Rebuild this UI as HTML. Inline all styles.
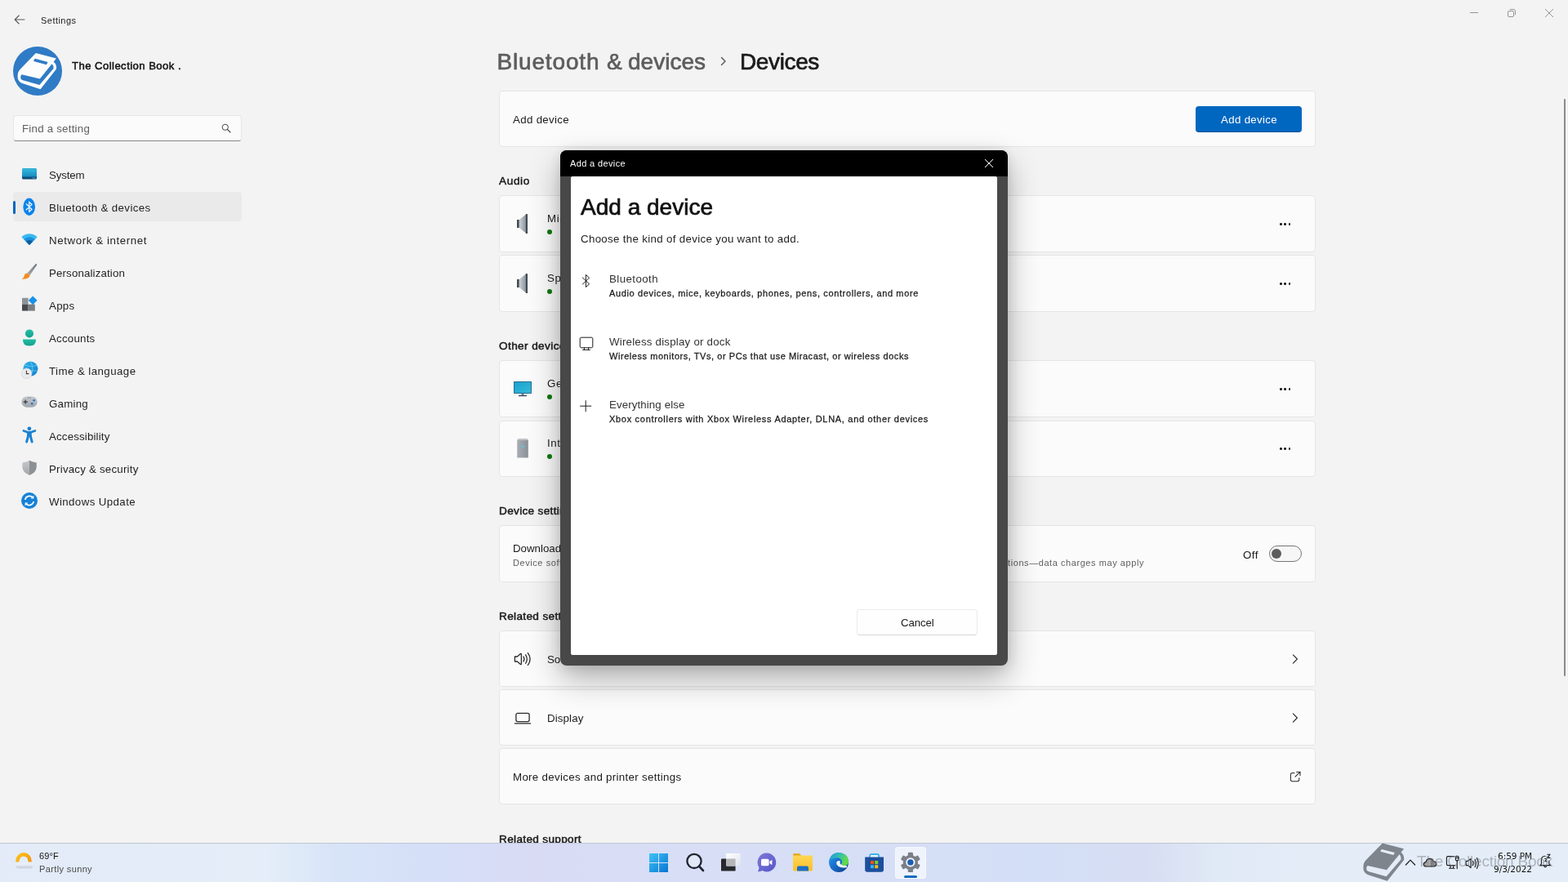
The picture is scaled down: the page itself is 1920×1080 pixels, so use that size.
<!DOCTYPE html>
<html lang="en">
<head>
<meta charset="utf-8">
<title>Settings - Bluetooth &amp; devices - Devices</title>
<style>
*{box-sizing:border-box;margin:0;padding:0}
html,body{width:1920px;height:1080px;overflow:hidden;background:#f3f3f3;font-family:"Liberation Sans",sans-serif;color:#1b1b1b}
.abs{position:absolute}
.t{position:absolute;white-space:nowrap;line-height:20px;font-size:13.3px;transform-origin:0 50%}
.nav .t{left:60px;color:#1f1f1f}
.card{position:absolute;left:611px;width:1000px;background:#fbfbfb;border:1px solid #e5e5e5;border-radius:4px}
.sec{position:absolute;left:611px;-webkit-text-stroke:.5px currentColor;font-size:13.6px;line-height:20px;white-space:nowrap;color:#1b1b1b;transform-origin:0 50%}
.dots{position:absolute;left:1567px;width:14px;height:4px}
.dots i{position:absolute;top:.9px;width:2.7px;height:2.7px;border-radius:50%;background:#1b1b1b}
.gdot{position:absolute;left:670px;width:6px;height:6px;border-radius:50%;background:#0f7b0f}
svg{position:absolute;overflow:visible}
.sb{-webkit-text-stroke:.7px currentColor}
.sb2{-webkit-text-stroke:.26px currentColor}
</style>
<style id="fit">
#tSettings{letter-spacing:0.469px}
#tName{letter-spacing:0.454px}
#tFind{letter-spacing:0.227px}
#n1{letter-spacing:-0.141px}
#n2{letter-spacing:0.367px}
#n3{letter-spacing:0.590px}
#n4{letter-spacing:0.139px}
#n5{letter-spacing:0.297px}
#n6{letter-spacing:0.225px}
#n7{letter-spacing:0.430px}
#n8{letter-spacing:0.240px}
#n9{letter-spacing:0.160px}
#n10{letter-spacing:0.213px}
#n11{letter-spacing:0.392px}
#hBt1{letter-spacing:0.852px}
#hBt3{letter-spacing:0.009px}
#hDev{letter-spacing:-0.371px}
#tAdd{letter-spacing:0.320px}
#tAddBtn{letter-spacing:0.320px}
#sAudio{letter-spacing:0.644px}
#sOther{letter-spacing:0.394px}
#sDevSet{letter-spacing:0.321px}
#sRel{letter-spacing:0.345px}
#sSup{letter-spacing:0.334px}
#tDl2{letter-spacing:0.566px}
#tOff{letter-spacing:0.500px}
#tDisp{letter-spacing:0.127px}
#tMore{letter-spacing:0.322px}
#gTitle{letter-spacing:0.366px}
#gH{letter-spacing:0.009px}
#gSub{letter-spacing:0.326px}
#g1{letter-spacing:0.424px}
#g1s{letter-spacing:0.637px}
#g2{letter-spacing:0.214px}
#g2s{letter-spacing:0.554px}
#g3{letter-spacing:0.105px}
#g3s{letter-spacing:0.697px}
#gCancel{letter-spacing:-0.148px}
#kTemp{letter-spacing:0.160px}
#kWx{letter-spacing:0.372px}
#kTime{letter-spacing:-0.045px}
#kDate{letter-spacing:-0.021px}
#kWm{letter-spacing:-0.213px}
</style>
</head>
<body>
<div id="root" style="position:absolute;left:0;top:0;width:1920px;height:1080px;will-change:transform">
<!-- ============ TITLE BAR ============ -->
<div id="titlebar">
  <svg style="left:17px;top:18px" width="14" height="12" viewBox="0 0 14 12"><path d="M6.2 1 L1.2 6 L6.2 11 M1.2 6 H13" fill="none" stroke="#5a5a5a" stroke-width="1.1" stroke-linecap="round" stroke-linejoin="round"/></svg>
  <div class="t" id="tSettings" style="left:50px;top:15px;font-size:11px;color:#1b1b1b">Settings</div>
  <!-- window controls -->
  <div class="abs" style="left:1800px;top:15px;width:10px;height:1px;background:#949494"></div>
  <svg style="left:1845px;top:10px" width="12" height="12" viewBox="0 0 12 12"><rect x="1.5" y="3.5" width="7" height="7" rx="1.5" fill="none" stroke="#949494" stroke-width="1"/><path d="M3.8 1.5 H8.3 A2.2 2.2 0 0 1 10.5 3.7 V8.2" fill="none" stroke="#949494" stroke-width="1"/></svg>
  <svg style="left:1891px;top:10px" width="12" height="12" viewBox="0 0 12 12"><path d="M1 1 L11 11 M11 1 L1 11" stroke="#949494" stroke-width="1"/></svg>
</div>

<!-- ============ SIDEBAR ============ -->
<div id="sidebar">
  <!-- avatar -->
  <svg style="left:16px;top:57px" width="60" height="60" viewBox="0 0 60 60">
    <circle cx="30" cy="30" r="30" fill="#2f7bc5"/>
    <path d="M27.9 8 L52.9 14.6 L49.6 18.8 Q53.6 21.5 53 27.6 L33.5 52.2 L10.5 44.8 Q5.2 42.5 5.6 35.5 Q5.8 30.5 9 27.4 Z" fill="#fdfdfd"/>
    <path d="M10.6 34.2 L32.8 39.4 L47.6 21.2 Q49.8 23 49.5 27.1 L32.4 46.9 L12 41.3 Q9 40 9.2 37.4 Q9.3 35 10.6 34.2 Z" fill="#2f7bc5"/>
    <path d="M27 14.8 L42.6 18.9 L40.9 22.2 L25.2 18.1 Q25.4 15.4 27 14.8 Z" fill="#2f7bc5"/>
  </svg>
  <div class="t" id="tName" style="left:88px;top:71px;-webkit-text-stroke:.5px currentColor;font-size:13.1px;color:#111">The Collection Book .</div>
  <!-- search -->
  <div class="abs" style="left:16px;top:141px;width:280px;height:32px;background:#fbfbfb;border:1px solid #e6e6e6;border-bottom:1px solid #868686;border-radius:4px"></div>
  <div class="t" id="tFind" style="left:27px;top:148px;color:#606060">Find a setting</div>
  <svg style="left:271px;top:151px" width="12" height="12" viewBox="0 0 12 12"><circle cx="4.8" cy="4.8" r="3.6" fill="none" stroke="#444" stroke-width="1"/><path d="M7.5 7.5 L11 11" stroke="#444" stroke-width="1.1" stroke-linecap="round"/></svg>
  <!-- selected bg -->
  <div class="abs" style="left:16px;top:235px;width:280px;height:36px;background:#eaeaea;border-radius:4px"></div>
  <div class="abs" style="left:16px;top:246px;width:3px;height:16px;background:#0067c0;border-radius:2px"></div>
  <div class="nav">
    <div class="t" id="n1" style="top:205px">System</div>
    <div class="t" id="n2" style="top:245px">Bluetooth &amp; devices</div>
    <div class="t" id="n3" style="top:285px">Network &amp; internet</div>
    <div class="t" id="n4" style="top:325px">Personalization</div>
    <div class="t" id="n5" style="top:365px">Apps</div>
    <div class="t" id="n6" style="top:405px">Accounts</div>
    <div class="t" id="n7" style="top:445px">Time &amp; language</div>
    <div class="t" id="n8" style="top:485px">Gaming</div>
    <div class="t" id="n9" style="top:525px">Accessibility</div>
    <div class="t" id="n10" style="top:565px">Privacy &amp; security</div>
    <div class="t" id="n11" style="top:605px">Windows Update</div>
  </div>
  <!-- nav icons -->
  <svg style="left:26px;top:204px" width="20" height="20" viewBox="0 0 20 20">
    <defs><linearGradient id="gSys" x1="0" y1="0" x2="0" y2="1"><stop offset="0" stop-color="#33bde0"/><stop offset="1" stop-color="#1889bd"/></linearGradient></defs>
    <rect x="1" y="2.2" width="18" height="13.4" rx="1.6" fill="#0e4d78"/>
    <path d="M1 3.8 A1.6 1.6 0 0 1 2.6 2.2 H17.4 A1.6 1.6 0 0 1 19 3.8 V12.6 H1 Z" fill="url(#gSys)"/>
    <rect x="14" y="13.6" width="1.2" height="1" fill="#7fd0ee"/><rect x="16" y="13.6" width="1.2" height="1" fill="#7fd0ee"/>
  </svg>
  <svg style="left:26px;top:243px" width="20" height="22" viewBox="0 0 20 22">
    <ellipse cx="9.7" cy="10.3" rx="7.3" ry="10.7" fill="#0b84ec"/>
    <path d="M6.2 6.8 L13 13.2 L9.7 16.4 V4.2 L13 7.4 L6.2 13.8" fill="none" stroke="#fff" stroke-width="1.2" stroke-linejoin="round" stroke-linecap="round"/>
  </svg>
  <svg style="left:26px;top:285px" width="20" height="16" viewBox="0 0 20 16">
    <path d="M10 15 L0.3 5.2 A13.8 13.8 0 0 1 19.7 5.2 Z" fill="#3bb9f0"/>
    <path d="M10 15 L3.2 8.1 A9.7 9.7 0 0 1 16.8 8.1 Z" fill="#1b8fdc"/>
    <path d="M10 15 L5.9 10.8 A5.8 5.8 0 0 1 14.1 10.8 Z" fill="#105c9c"/>
  </svg>
  <svg style="left:26px;top:322px" width="20" height="22" viewBox="0 0 20 22">
    <defs><linearGradient id="gBr" x1="1" y1="0" x2="0" y2="1"><stop offset="0" stop-color="#6f747b"/><stop offset="1" stop-color="#a6abb2"/></linearGradient></defs>
    <path d="M17.6 1.2 Q19.6 0.6 19 2.8 L10.6 15 L7.4 12.6 Z" fill="url(#gBr)"/>
    <path d="M7.4 12.4 L10.7 15 Q9.6 19 4.6 19.6 Q2 20 1 19.4 Q3.4 18 3.8 15.6 Q4.4 12.4 7.4 12.4 Z" fill="#f28c1e"/>
  </svg>
  <svg style="left:26px;top:362px" width="20" height="20" viewBox="0 0 20 20">
    <rect x="1" y="2.8" width="7.6" height="7.8" fill="#8f9498"/>
    <rect x="1" y="10.6" width="7.6" height="8" fill="#48494c"/>
    <rect x="8.6" y="10.6" width="8.2" height="8" fill="#7a7e84"/>
    <path d="M14.2 0.4 L19.6 5.8 L14.2 11.2 L8.8 5.8 Z" fill="#1693e8"/>
  </svg>
  <svg style="left:26px;top:402px" width="20" height="22" viewBox="0 0 20 22">
    <defs><linearGradient id="gAc" x1="0" y1="0" x2="0" y2="1"><stop offset="0" stop-color="#22bfa6"/><stop offset="1" stop-color="#15a08f"/></linearGradient></defs>
    <circle cx="10" cy="6.4" r="5" fill="url(#gAc)"/>
    <path d="M2 13.4 H18 Q18.4 21.4 10 21.4 Q1.6 21.4 2 13.4 Z" fill="url(#gAc)"/>
  </svg>
  <svg style="left:26px;top:442px" width="22" height="22" viewBox="0 0 22 22">
    <defs><linearGradient id="gGl" x1="0" y1="0" x2="1" y2="1"><stop offset="0" stop-color="#2fb4ea"/><stop offset="1" stop-color="#0f7fd0"/></linearGradient></defs>
    <circle cx="11.4" cy="9.6" r="9" fill="url(#gGl)"/>
    <path d="M11.4 0.8 Q16.4 9.6 11.4 18.4 M4.4 5 Q11.4 8 19 5.6 M3.4 13 Q11.4 10.4 19.8 12.4" fill="none" stroke="#7fd4f6" stroke-width="0.7"/>
    <circle cx="6.6" cy="15.2" r="6.3" fill="#e9ebed"/>
    <circle cx="6.6" cy="15.2" r="6.3" fill="none" stroke="#c9cdd1" stroke-width="0.6"/>
    <path d="M6.4 11.8 V15.6 H9.4" fill="none" stroke="#4a3a3a" stroke-width="1.1"/>
  </svg>
  <svg style="left:26px;top:484px" width="20" height="16" viewBox="0 0 20 16">
    <defs><linearGradient id="gGm" x1="0" y1="0" x2="0" y2="1"><stop offset="0" stop-color="#c4c8cd"/><stop offset="1" stop-color="#a1a6ad"/></linearGradient></defs>
    <rect x="0.3" y="1.4" width="19.4" height="13.4" rx="6.7" fill="url(#gGm)"/>
    <path d="M5.2 5.6 V10.6 M2.7 8.1 H7.7" stroke="#33363b" stroke-width="1.2"/>
    <circle cx="15.6" cy="6.2" r="1.3" fill="#1f6fc4"/><circle cx="13.2" cy="10.2" r="1.3" fill="#1f6fc4"/>
    <rect x="8.2" y="2.6" width="1" height="0.9" fill="#55595f"/><rect x="10.6" y="2.6" width="1" height="0.9" fill="#55595f"/>
  </svg>
  <svg style="left:26px;top:522px" width="20" height="22" viewBox="0 0 20 22">
    <circle cx="9.9" cy="2.8" r="2.4" fill="#1a80d2"/>
    <g stroke="#1a80d2" stroke-linecap="round" stroke-linejoin="round" fill="none">
      <path d="M2.9 5.5 L7.8 7.3 H12 L16.9 5.5" stroke-width="2.7"/>
      <path d="M9.9 7 V12.4" stroke-width="5.6" stroke-linecap="butt"/>
      <path d="M8.5 12 L6.6 19" stroke-width="2.9"/>
      <path d="M11.3 12 L13.2 19" stroke-width="2.9"/>
    </g>
  </svg>
  <svg style="left:26px;top:563px" width="20" height="20" viewBox="0 0 20 20">
    <defs><linearGradient id="gShL" x1="0" y1="0" x2="0" y2="1"><stop offset="0" stop-color="#c6c9cc"/><stop offset="1" stop-color="#a3a6a9"/></linearGradient></defs>
    <path d="M10 0.8 Q13.4 3 18.6 3.4 V9 Q18.4 15.4 10 18.8 Q1.6 15.4 1.4 9 V3.4 Q6.6 3 10 0.8 Z" fill="url(#gShL)"/>
    <path d="M10 0.8 Q13.4 3 18.6 3.4 V9 Q18.4 15.4 10 18.8 Z" fill="#8d9194"/>
  </svg>
  <svg style="left:26px;top:603px" width="20" height="20" viewBox="0 0 20 20">
    <circle cx="10" cy="10" r="10" fill="#1482d8"/>
    <path d="M4.8 9 A5.4 5.4 0 0 1 14.2 6.2 M15.2 11 A5.4 5.4 0 0 1 5.8 13.8" fill="none" stroke="#fff" stroke-width="1.7"/>
    <path d="M15.4 3.6 V7.4 H11.6 Z" fill="#fff"/><path d="M4.6 16.4 V12.6 H8.4 Z" fill="#fff"/>
  </svg>
</div>

<!-- ============ MAIN ============ -->
<div id="main">
  <div class="t sb" id="hBt1" style="left:608.4px;top:56px;font-size:28px;line-height:40px;color:#5d5d5d">Bluetooth</div>
  <div class="t sb" id="hBt2" style="left:743px;top:56px;font-size:28px;line-height:40px;color:#5d5d5d">&amp;</div>
  <div class="t sb" id="hBt3" style="left:769px;top:56px;font-size:28px;line-height:40px;color:#5d5d5d">devices</div>
  <svg style="left:881px;top:69px" width="10" height="12" viewBox="0 0 10 12"><path d="M2.5 1.5 L7 6 L2.5 10.5" fill="none" stroke="#5d5d5d" stroke-width="1.5" stroke-linecap="round" stroke-linejoin="round"/></svg>
  <div class="t sb" id="hDev" style="left:906px;top:56px;font-size:28px;line-height:40px;color:#1a1a1a">Devices</div>

  <div class="card" style="top:111px;height:69px"></div>
  <div class="t" id="tAdd" style="left:628px;top:137px">Add device</div>
  <div class="abs" style="left:1464px;top:130px;width:130px;height:32px;background:#0067c0;border-radius:4px;border-bottom:1px solid #00529a"></div>
  <div class="t" id="tAddBtn" style="left:1495px;top:137px;color:#fff">Add device</div>

  <div class="sec" id="sAudio" style="top:212px">Audio</div>
  <div class="card" style="top:239px;height:70px"></div>
  <div class="card" style="top:312px;height:70px"></div>
  <div class="t" id="dMic" style="letter-spacing:.6px;left:670px;top:258px">Microphone (Realtek(R) Audio)</div>
  <div class="t" id="dSpk" style="letter-spacing:.6px;left:670px;top:331px">Speakers (Realtek(R) Audio)</div>
  <div class="gdot" style="top:281px"></div><div class="gdot" style="top:354px"></div>
  <div class="dots" style="top:272px"><i style="left:.2px"></i><i style="left:5.4px"></i><i style="left:10.6px"></i></div>
  <div class="dots" style="top:345px"><i style="left:.2px"></i><i style="left:5.4px"></i><i style="left:10.6px"></i></div>

  <div class="sec" id="sOther" style="top:414px">Other devices</div>
  <div class="card" style="top:441px;height:70px"></div>
  <div class="card" style="top:515px;height:69px"></div>
  <div class="t" id="dMon" style="letter-spacing:.6px;left:670px;top:460px">Generic PnP Monitor</div>
  <div class="t" id="dInt" style="letter-spacing:.6px;left:670px;top:533px">Intel(R) Desktop PC</div>
  <div class="gdot" style="top:483px"></div><div class="gdot" style="top:556px"></div>
  <div class="dots" style="top:474px"><i style="left:.2px"></i><i style="left:5.4px"></i><i style="left:10.6px"></i></div>
  <div class="dots" style="top:547px"><i style="left:.2px"></i><i style="left:5.4px"></i><i style="left:10.6px"></i></div>

  <div class="sec" id="sDevSet" style="top:616px">Device settings</div>
  <div class="card" style="top:643px;height:70px"></div>
  <div class="t" id="tDl" style="left:628px;top:662px">Download over metered connections</div>
  <div class="t" id="tDl2" style="left:628px;top:679px;font-size:11px;color:#5f5f5f">Device software (drivers, info, and apps) for new devices will download when you're on metered internet connections—data charges may apply</div>
  <div class="t" id="tOff" style="left:1522px;top:670px">Off</div>
  <div class="abs" style="left:1554px;top:668px;width:40px;height:20px;border:1px solid #767676;border-radius:10px;background:#f6f6f6"></div>
  <div class="abs" style="left:1556.6px;top:672px;width:12px;height:12px;border-radius:50%;background:#5c5c5c"></div>

  <div class="sec" id="sRel" style="top:745px">Related settings</div>
  <div class="card" style="top:772px;height:69px"></div>
  <div class="card" style="top:844px;height:69px"></div>
  <div class="card" style="top:916px;height:69px"></div>
  <div class="t" id="tSound" style="left:670px;top:798px">Sound</div>
  <div class="t" id="tDisp" style="left:670px;top:870px">Display</div>
  <div class="t" id="tMore" style="left:628px;top:942px">More devices and printer settings</div>
  <div class="sec" id="sSup" style="top:1018px">Related support</div>
  <!-- device icons -->
  <svg style="left:632px;top:261px" width="16" height="26" viewBox="0 0 16 26">
    <defs><linearGradient id="gSp" x1="0" y1="0" x2="1" y2="0"><stop offset="0" stop-color="#ccd1d6"/><stop offset="1" stop-color="#8d969e"/></linearGradient></defs>
    <rect x="1" y="8" width="2.8" height="10" fill="#424a51"/>
    <path d="M3.8 8 L12 1.6 V24.4 L3.8 18 Z" fill="url(#gSp)"/>
    <rect x="11.8" y="1" width="2.2" height="24" rx="0.6" fill="#434b53"/>
  </svg>
  <svg style="left:632px;top:334px" width="16" height="26" viewBox="0 0 16 26">
    <rect x="1" y="8" width="2.8" height="10" fill="#424a51"/>
    <path d="M3.8 8 L12 1.6 V24.4 L3.8 18 Z" fill="url(#gSp)"/>
    <rect x="11.8" y="1" width="2.2" height="24" rx="0.6" fill="#434b53"/>
  </svg>
  <svg style="left:628px;top:466px" width="24" height="20" viewBox="0 0 24 20">
    <defs><linearGradient id="gMo" x1="0" y1="0" x2="1" y2="1"><stop offset="0" stop-color="#1c9fcf"/><stop offset="1" stop-color="#34bcd8"/></linearGradient></defs>
    <rect x="1" y="1" width="22" height="15" rx="0.8" fill="#27617f"/>
    <rect x="1.8" y="1.8" width="20.4" height="13.4" fill="url(#gMo)"/>
    <rect x="10.4" y="16" width="3.2" height="2" fill="#6f8a9a"/>
    <rect x="7" y="18" width="10" height="1.2" fill="#2c3e4e"/>
  </svg>
  <svg style="left:632px;top:536px" width="16" height="26" viewBox="0 0 16 26">
    <defs><linearGradient id="gTw" x1="0" y1="0" x2="1" y2="0"><stop offset="0" stop-color="#a9aeb4"/><stop offset="1" stop-color="#8b9198"/></linearGradient></defs>
    <path d="M1.2 3 L2.6 1.2 H13.4 L14.8 3 V24.6 H1.2 Z" fill="url(#gTw)"/>
    <path d="M1.2 3 L2.6 1.2 H13.4 L14.8 3 Z" fill="#c3c7cb"/>
    <circle cx="8" cy="10.6" r="1.5" fill="#5fc6e2"/>
  </svg>
  <!-- related settings icons -->
  <svg style="left:629px;top:797px" width="22" height="20" viewBox="0 0 22 20">
    <g fill="none" stroke="#2a2a2a" stroke-width="1.3" stroke-linecap="round" stroke-linejoin="round">
      <path d="M1.4 7 H4.4 L8.4 3.6 Q9.4 3 9.4 4.2 V15.8 Q9.4 17 8.4 16.4 L4.4 13 H1.4 Z"/>
      <path d="M12 7 Q13.8 10 12 13"/>
      <path d="M14.6 4.8 Q18 10 14.6 15.2"/>
      <path d="M17.4 2.6 Q22.8 10 17.4 17.4"/>
    </g>
  </svg>
  <svg style="left:629px;top:871px" width="22" height="16" viewBox="0 0 22 16">
    <rect x="2.9" y="2.4" width="16.2" height="10.2" rx="2" fill="none" stroke="#2a2a2a" stroke-width="1.3"/>
    <path d="M1.4 14.9 H20.6" stroke="#2a2a2a" stroke-width="1.3" stroke-linecap="round"/>
  </svg>
  <svg style="left:1581px;top:800px" width="10" height="14" viewBox="0 0 10 14"><path d="M2.4 1.8 L7.4 7 L2.4 12.2" fill="none" stroke="#2a2a2a" stroke-width="1.1" stroke-linecap="round" stroke-linejoin="round"/></svg>
  <svg style="left:1581px;top:872px" width="10" height="14" viewBox="0 0 10 14"><path d="M2.4 1.8 L7.4 7 L2.4 12.2" fill="none" stroke="#2a2a2a" stroke-width="1.1" stroke-linecap="round" stroke-linejoin="round"/></svg>
  <svg style="left:1579px;top:944px" width="14" height="14" viewBox="0 0 14 14">
    <g fill="none" stroke="#2a2a2a" stroke-width="1.05" stroke-linecap="round" stroke-linejoin="round">
      <path d="M6 2.4 H3.6 Q1.4 2.4 1.4 4.6 V10.6 Q1.4 12.8 3.6 12.8 H9.6 Q11.8 12.8 11.8 10.6 V8.4"/>
      <path d="M8.6 1.2 H13 V5.6 M13 1.2 L7 7.2"/>
    </g>
  </svg>
  <!-- scrollbar -->
  <div class="abs" style="left:1915px;top:121px;width:2px;height:707px;background:#8a8a8a;border-radius:1px"></div>
</div>

<!-- ============ DIALOG ============ -->
<div id="dialog" class="abs" style="left:686px;top:184px;width:548px;height:631px;background:#484848;border-radius:8px;box-shadow:0 16px 38px rgba(0,0,0,.30),0 2px 16px rgba(0,0,0,.11);overflow:hidden">
  <div class="abs" style="left:0;top:0;width:548px;height:32px;background:#000"></div>
  <div class="abs" style="left:13px;top:32px;width:522px;height:586px;background:#fff;border-radius:2px"></div>
  <div class="t" id="gTitle" style="left:12px;top:6px;font-size:11px;color:#fff">Add a device</div>
  <svg style="left:520px;top:11px" width="10" height="10" viewBox="0 0 10 10"><path d="M0 0 L10 10 M10 0 L0 10" stroke="#fff" stroke-width="1"/></svg>
  <div class="t sb" id="gH" style="left:25px;top:50px;font-size:28px;line-height:40px;color:#111">Add a device</div>
  <div class="t" id="gSub" style="left:25px;top:99px;color:#1f1f1f">Choose the kind of device you want to add.</div>

  <div class="t" id="g1" style="left:60px;top:148px;color:#333">Bluetooth</div>
  <div class="t sb2" id="g1s" style="left:60px;top:165px;font-size:11px;color:#1a1a1a">Audio devices, mice, keyboards, phones, pens, controllers, and more</div>
  <div class="t" id="g2" style="left:60px;top:225px;color:#333">Wireless display or dock</div>
  <div class="t sb2" id="g2s" style="left:60px;top:242px;font-size:11px;color:#1a1a1a">Wireless monitors, TVs, or PCs that use Miracast, or wireless docks</div>
  <div class="t" id="g3" style="left:60px;top:302px;color:#333">Everything else</div>
  <div class="t sb2" id="g3s" style="left:60px;top:319px;font-size:11px;color:#1a1a1a">Xbox controllers with Xbox Wireless Adapter, DLNA, and other devices</div>
  <!-- dialog icons (coords relative to dialog at 686,184) -->
  <svg style="left:26px;top:151px" width="12" height="18" viewBox="0 0 12 18"><path d="M1.4 5 L9.6 12.8 L5.4 16.6 V1.4 L9.6 5.2 L1.4 13" fill="none" stroke="#1b1b1b" stroke-width="1" stroke-linejoin="round" stroke-linecap="round"/></svg>
  <svg style="left:23px;top:228px" width="18" height="18" viewBox="0 0 18 18">
    <g fill="none" stroke="#1b1b1b" stroke-width="1" stroke-linejoin="round">
      <rect x="1.2" y="1.2" width="15.6" height="12.6" rx="1.6"/>
      <path d="M6.4 13.8 V16.4 M11.6 13.8 V16.4 M4.6 16.4 H13.4" stroke-linecap="round"/>
    </g>
  </svg>
  <svg style="left:24px;top:306px" width="14" height="14" viewBox="0 0 14 14"><path d="M7.2 0.6 V13.8 M0.6 7.2 H13.8" stroke="#1b1b1b" stroke-width="1" stroke-linecap="round"/></svg>
  <div class="abs" style="left:363px;top:562px;width:148px;height:32px;border:1px solid #ebebeb;border-bottom-color:#d6d6d6;border-radius:4px;background:#fefefe"></div>
  <div class="t" id="gCancel" style="left:417px;top:569px;color:#1b1b1b">Cancel</div>
</div>

<!-- ============ TASKBAR ============ -->
<div id="taskbar" class="abs" style="left:0;top:1032px;width:1920px;height:48px;background:linear-gradient(90deg,#e2ebf7 0%,#e4edf8 17%,#d7e4f8 21.5%,#d5dff7 28%,#d9dbf4 34%,#d8def6 42%,#d6dff6 58%,#d3dff6 66%,#d7ddf3 73%,#e0e9f6 77.5%,#e4edf7 85%,#e4edf8 100%);border-top:1px solid #bfc6d3">
  <div class="t" id="kTemp" style="left:48px;top:5px;font-size:11px;color:#111">69°F</div>
  <div class="t" id="kWx" style="left:48px;top:21px;font-size:11px;color:#4a4a4a">Partly sunny</div>
  <div class="t" id="kTime" style="left:1834px;top:5px;font-size:10.5px;font-family:'DejaVu Sans','Liberation Sans',sans-serif;color:#111">6:59 PM</div>
  <div class="t" id="kDate" style="left:1829px;top:21px;font-size:10.5px;font-family:'DejaVu Sans','Liberation Sans',sans-serif;color:#111">9/3/2022</div>
  <!-- taskbar icons (coords relative to taskbar at y=1032; border-top 1px so content origin y=1033) -->
  <!-- weather -->
  <svg style="left:18px;top:10px" width="24" height="22" viewBox="0 0 24 22">
    <defs><linearGradient id="gSun" x1="0" y1="0" x2="1" y2="0.6"><stop offset="0" stop-color="#fdc81c"/><stop offset="1" stop-color="#f59a12"/></linearGradient>
    <linearGradient id="gCl" x1="0" y1="0" x2="0" y2="1"><stop offset="0" stop-color="#e3edfa"/><stop offset="0.6" stop-color="#e9eff8"/><stop offset="1" stop-color="#c3ccda"/></linearGradient></defs>
    <path d="M1.3 12.6 V10.8 A9.7 9.7 0 0 1 20.7 10.8 V12.6 H16.3 V10.8 A5.3 5.3 0 0 0 5.7 10.8 V12.6 Z" fill="url(#gSun)"/>
    <path d="M5 20.2 Q0.8 20.2 0.8 16.6 Q1 13.4 4.8 13 Q6 9.2 10.8 8.8 Q15.4 9 16.8 12.8 Q22.6 12.4 22.9 16.4 Q23 20.2 18.8 20.2 Z" fill="url(#gCl)"/>
  </svg>
  <!-- windows -->
  <svg style="left:795px;top:12px" width="24" height="24" viewBox="0 0 24 24">
    <defs><linearGradient id="gWin" x1="0" y1="0" x2="1" y2="1"><stop offset="0" stop-color="#3cc4f7"/><stop offset="1" stop-color="#0a74d2"/></linearGradient></defs>
    <path d="M0 0 H11 V11 H0 Z M12 0 H23 V11 H12 Z M0 12 H11 V23 H0 Z M12 12 H23 V23 H12 Z" fill="url(#gWin)"/>
  </svg>
  <!-- search -->
  <svg style="left:839px;top:11px" width="26" height="26" viewBox="0 0 26 26">
    <circle cx="11" cy="10.4" r="8.6" fill="#e9eefa" fill-opacity=".6" stroke="#1f2430" stroke-width="2.3"/>
    <path d="M17.2 16.8 L22 22" stroke="#1f2430" stroke-width="2.6" stroke-linecap="round"/>
  </svg>
  <!-- task view -->
  <svg style="left:882px;top:11px" width="26" height="26" viewBox="0 0 26 26">
    <defs><linearGradient id="gTv" x1="0" y1="0" x2="1" y2="1"><stop offset="0" stop-color="#ffffff"/><stop offset="1" stop-color="#dfe3ee"/></linearGradient></defs>
    <rect x="1" y="7.6" width="17.6" height="15" rx="1.2" fill="#26282b"/>
    <rect x="7" y="1" width="17.8" height="15.4" rx="1.2" fill="url(#gTv)"/>
    <path d="M7 7.6 H18.6 V16.4 H8.2 A1.2 1.2 0 0 1 7 15.2 Z" fill="#b3b5b8"/>
  </svg>
  <!-- chat -->
  <svg style="left:925px;top:10px" width="28" height="28" viewBox="0 0 28 28">
    <defs><linearGradient id="gCh" x1="0" y1="0" x2="1" y2="1"><stop offset="0" stop-color="#8276d8"/><stop offset="1" stop-color="#5458c8"/></linearGradient></defs>
    <path d="M14 1.6 A11.4 11.4 0 1 1 8.4 23 Q5.6 24.4 2.8 24.2 Q4.4 22 4.4 19.2 A11.4 11.4 0 0 1 14 1.6 Z" fill="url(#gCh)"/>
    <rect x="7" y="8.8" width="9.6" height="8.4" rx="1.6" fill="#fff"/>
    <path d="M17.4 12 L20.4 9.8 V16.2 L17.4 14 Z" fill="#fff"/>
  </svg>
  <!-- explorer -->
  <svg style="left:970px;top:11px" width="26" height="24" viewBox="0 0 26 24">
    <defs><linearGradient id="gEx" x1="0" y1="0" x2="0" y2="1"><stop offset="0" stop-color="#ffd653"/><stop offset="1" stop-color="#fcbf2a"/></linearGradient></defs>
    <path d="M1 2.6 Q1 1.2 2.4 1.2 H8.2 Q9.4 1.2 10 2.2 L11 4 H1 Z" fill="#dfa515"/>
    <path d="M1 3.6 H23.6 Q25 3.6 25 5 V21 Q25 22.4 23.6 22.4 H2.4 Q1 22.4 1 21 Z" fill="url(#gEx)"/>
    <path d="M6 22.4 V18.2 Q6 16.4 7.8 16.4 H18.2 Q20 16.4 20 18.2 V22.4 Z" fill="#1a70c6"/>
  </svg>
  <!-- edge -->
  <svg style="left:1015px;top:11px" width="24" height="24" viewBox="0 0 24 24">
    <defs>
      <linearGradient id="gEd1" x1="0" y1="0.2" x2="0.9" y2="1"><stop offset="0" stop-color="#2394ee"/><stop offset="0.55" stop-color="#1565c0"/><stop offset="1" stop-color="#0d3b88"/></linearGradient>
      <linearGradient id="gEd2" x1="0" y1="0" x2="1" y2="0.35"><stop offset="0" stop-color="#1f97d6"/><stop offset="0.5" stop-color="#32bdb4"/><stop offset="1" stop-color="#63db46"/></linearGradient>
    </defs>
    <circle cx="12" cy="12" r="12" fill="url(#gEd1)"/>
    <path d="M0.7 9 Q3 0.2 12 0 Q23.5 0.6 24 10.5 Q24 15.6 19.5 15.9 Q15.6 15.8 14.6 14.6 Q17.2 11.6 15 8.8 Q12.6 6 8.4 6.4 Q4 7 0.7 9 Z" fill="url(#gEd2)"/>
    <path d="M10.5 10.6 Q12.6 9.4 14 10.6 Q12.8 12.8 14.6 14.6 Q16.5 16.4 21.9 16 Q22.4 17 21.6 18.2 Q17 19.2 13 17.6 Q9 15.6 9.2 12.8 Q9.4 11.2 10.5 10.6 Z" fill="#f1f7fd"/>
  </svg>
  <!-- store -->
  <svg style="left:1058px;top:11px" width="26" height="26" viewBox="0 0 26 26">
    <path d="M7 6.2 V4.2 Q7 2 9.2 2 H16 Q18.2 2 18.2 4.2 V6.2" fill="#e6f5fd" stroke="#3fb2ee" stroke-width="1.8"/>
    <path d="M1.2 5.6 H24 V21 Q24 23.8 21.2 23.8 H4 Q1.2 23.8 1.2 21 Z" fill="#1c4e9b"/>
    <rect x="8" y="10" width="4" height="4" fill="#f1511b"/><rect x="13.2" y="10" width="4" height="4" fill="#80cc28"/>
    <rect x="8" y="15.2" width="4" height="4" fill="#31b5f3"/><rect x="13.2" y="15.2" width="4" height="4" fill="#fbbc09"/>
  </svg>
  <!-- settings (active) -->
  <div class="abs" style="left:1096px;top:4px;width:38px;height:39px;border-radius:4px;background:rgba(255,255,255,.62);border:1px solid rgba(255,255,255,.5)"></div>
  <div class="abs" style="left:1107px;top:39px;width:16px;height:3px;border-radius:2px;background:#0f6cbd"></div>
  <svg style="left:1102px;top:10px" width="26" height="26" viewBox="0 0 26 26">
    <g transform="translate(12.9 12.9)">
      <g fill="#7b8088">
        <circle r="9.2"/>
        <rect x="-3.1" y="-12.2" width="6.2" height="6" rx="1.2"/>
        <rect x="-3.1" y="-12.2" width="6.2" height="6" rx="1.2" transform="rotate(60)"/>
        <rect x="-3.1" y="-12.2" width="6.2" height="6" rx="1.2" transform="rotate(120)"/>
        <rect x="-3.1" y="-12.2" width="6.2" height="6" rx="1.2" transform="rotate(180)"/>
        <rect x="-3.1" y="-12.2" width="6.2" height="6" rx="1.2" transform="rotate(240)"/>
        <rect x="-3.1" y="-12.2" width="6.2" height="6" rx="1.2" transform="rotate(300)"/>
      </g>
      <circle r="5.6" fill="#f4f7fc"/>
      <circle r="3.7" fill="#1b5fb3"/>
    </g>
  </svg>
  <!-- watermark book -->
  <svg style="left:1665px;top:-3px" width="60" height="54" viewBox="0 0 60 54">
    <g transform="translate(-1.5 -6) scale(1.05)">
      <path d="M27.9 8 L52.9 14.6 L49.6 18.8 Q53.6 21.5 53 27.6 L33.5 52.2 L10.5 44.8 Q5.2 42.5 5.6 35.5 Q5.8 30.5 9 27.4 Z" fill="#7f858d"/>
      <path d="M10.6 34.2 L32.8 39.4 L47.6 21.2 Q49.8 23 49.5 27.1 L32.4 46.9 L12 41.3 Q9 40 9.2 37.4 Q9.3 35 10.6 34.2 Z" fill="#e3ecf7"/>
      <path d="M27.2 15.2 L42.2 19.1 L40.8 21.8 L25.6 17.9 Q25.8 15.6 27.2 15.2 Z" fill="#e9eef5"/>
    </g>
  </svg>
  <div class="t" id="kWm" style="left:1735px;top:10px;font-size:19px;line-height:24px;color:#757b83;opacity:.5;z-index:5">The Collection Book</div>
  <!-- tray -->
  <svg style="left:1720px;top:17.5px" width="14" height="10" viewBox="0 0 14 10"><path d="M1.4 8 L7 2.2 L12.6 8" fill="none" stroke="#1b1b1b" stroke-width="1.2" stroke-linecap="round" stroke-linejoin="round"/></svg>
  <svg style="left:1742px;top:15.5px" width="18" height="14" viewBox="0 0 18 14">
    <defs><linearGradient id="gTc" x1="0" y1="0" x2="1" y2="0"><stop offset="0" stop-color="#8d8d8d"/><stop offset="0.45" stop-color="#b9b9b9"/><stop offset="0.6" stop-color="#7d7d7d"/><stop offset="1" stop-color="#9a9a9a"/></linearGradient></defs>
    <path d="M4.6 12 Q1.2 12 1.2 9.2 Q1.4 6.8 4 6.6 Q4.8 2.4 9 2.4 Q12.4 2.6 13.2 5.8 Q16.8 6 16.8 9 Q16.6 12 13.6 12 Z" fill="url(#gTc)" stroke="#1b1b1b" stroke-width="1.1"/></svg>
  <svg style="left:1770px;top:11px" width="20" height="22" viewBox="0 0 20 22">
    <g fill="none" stroke="#1b1b1b" stroke-width="1.15" stroke-linejoin="round" stroke-linecap="round">
      <path d="M10.6 4.6 H3 Q1.4 4.6 1.4 6.2 V14 Q1.4 15.6 3 15.6 H11.6"/>
      <path d="M4.6 19.2 H11 M6 15.8 V19 M9.6 15.8 V19"/>
      <rect x="12.4" y="4.2" width="3.6" height="5.6" rx="1.2"/>
      <path d="M14.2 9.8 V19.6 M12.6 6.4 H15.8"/>
    </g>
  </svg>
  <svg style="left:1794px;top:14.5px" width="20" height="18" viewBox="0 0 20 18">
    <g fill="none" stroke="#1b1b1b" stroke-width="1.15" stroke-linecap="round" stroke-linejoin="round">
      <path d="M1.2 6.4 H3.6 L7 3.4 V14.6 L3.6 11.6 H1.2 Z"/>
      <path d="M9.6 6.4 Q11 9 9.6 11.6"/><path d="M12 4.4 Q14.6 9 12 13.6"/><path d="M14.4 2.6 Q18 9 14.4 15.4"/>
    </g>
  </svg>
  <svg style="left:1884px;top:10px" width="18" height="22" viewBox="0 0 18 22">
    <g fill="none" stroke="#1b1b1b" stroke-width="1.1" stroke-linecap="round" stroke-linejoin="round">
      <path d="M3.4 14.8 V10 Q3.4 5.4 8 5.2 M12.8 11 V14.8 L14.6 16.6 H1.8 L3.4 14.8"/>
      <path d="M6.6 17.6 Q8.2 19.6 9.8 17.6"/>
      <path d="M7.6 8.6 H10 L7.6 11.6 H10" stroke-width="1"/>
      <path d="M10.8 3.2 H14 L10.8 7.4 H14"/>
    </g>
  </svg>
</div>
</div>
</body>
</html>
